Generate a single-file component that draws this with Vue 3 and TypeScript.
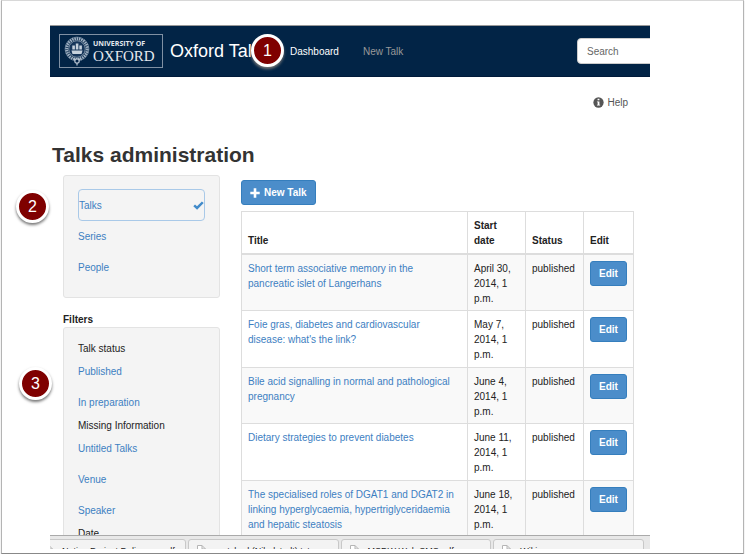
<script setup lang="ts">
interface Talk {
  title: string
  date: string
}

const sections: string[] = ['Series', 'People']

const talks: Talk[] = [
  { title: 'Short term associative memory in the pancreatic islet of Langerhans', date: 'April 30, 2014, 1 p.m.' },
  { title: "Foie gras, diabetes and cardiovascular disease: what's the link?", date: 'May 7, 2014, 1 p.m.' },
  { title: 'Bile acid signalling in normal and pathological pregnancy', date: 'June 4, 2014, 1 p.m.' },
  { title: 'Dietary strategies to prevent diabetes', date: 'June 11, 2014, 1 p.m.' },
  { title: 'The specialised roles of DGAT1 and DGAT2 in linking hyperglycaemia, hypertriglyceridaemia and hepatic steatosis', date: 'June 18, 2014, 1 p.m.' },
]

const filters: { heading: string; links: string[] }[] = [
  { heading: 'Talk status', links: ['Published', 'In preparation'] },
  { heading: 'Missing Information', links: ['Untitled Talks', 'Venue', 'Speaker'] },
  { heading: 'Date', links: [] },
]

const downloads: string[] = ['Native Project Delivery....pdf', 'matched (Nibolstadt).txt', 'MSDW Web SMS.pdf', 'Wiki.png']
</script>

<template>
  <div class="slide">
    <div class="browser">
      <header class="navbar">
        <a class="logo" href="#" aria-label="University of Oxford">
          <svg class="crest" viewBox="0 0 26 30" aria-hidden="true">
            <circle cx="13" cy="13" r="10.4" fill="none" stroke="#9fb0c2" stroke-width="3" stroke-dasharray="1.6 .7" />
            <circle cx="13" cy="13" r="12" fill="none" stroke="#8195ab" stroke-width=".6" />
            <circle cx="13" cy="13" r="8.3" fill="#16365a" stroke="#a9b9c9" stroke-width=".7" />
            <path d="M7.500 14.500h11l-1 3.500h-9zM8.300 9.500h2.600v4H8.300zM11.800 7.500h2.600v6h-2.600zM15.300 9.500h2.600v4h-2.600z" fill="#c6d1dc" />
            <circle cx="13" cy="25" r="2.200" fill="#002147" stroke="#b7c4d1" stroke-width="1.200" />
            <path d="M13 27v2.500M9.500 22.500l2 1.500M16.500 22.500l-2 1.500" fill="none" stroke="#b7c4d1" stroke-width="1.200" />
          </svg>
          <span class="logo-text">
            <span class="logo-small">UNIVERSITY OF</span>
            <span class="logo-large">OXFORD</span>
          </span>
        </a>
        <a class="brand" href="#">Oxford Talks</a>
        <nav class="menu">
          <a class="current" href="#">Dashboard</a>
          <a href="#">New Talk</a>
        </nav>
        <input class="search" type="search" placeholder="Search" aria-label="Search" />
      </header>

      <main class="page">
        <a class="help" href="#">
          <svg viewBox="0 0 12 12" aria-hidden="true">
            <circle cx="6" cy="6" r="5.600" fill="#555" />
            <path d="M5 2h2v1.600H5zM4.300 4.800H7v3.600h.8v1H4.300v-1h.8V5.800h-.8z" fill="#fff" />
          </svg>
          Help
        </a>
        <h1>Talks administration</h1>
        <div class="columns">
          <aside>
            <nav class="well">
              <a class="item selected" href="#">
                Talks
                <svg viewBox="0 0 11 9" aria-hidden="true">
                  <path d="M.3 5.200 2 3.400 4 5.200 8.900.4l1.800 1.700L4.100 8.700z" fill="#428bca" />
                </svg>
              </a>
              <a v-for="s in sections" :key="s" class="item" href="#">{{ s }}</a>
            </nav>
            <h2>Filters</h2>
            <div class="well">
              <template v-for="f in filters" :key="f.heading">
                <h3>{{ f.heading }}</h3>
                <a v-for="l in f.links" :key="l" class="item" href="#">{{ l }}</a>
              </template>
            </div>
          </aside>

          <section class="content">
            <button class="btn new" type="button">
              <svg viewBox="0 0 10 10" aria-hidden="true"><path d="M3.700.3h2.600v3.400h3.400v2.600H6.300v3.400H3.700V6.300H.3V3.700h3.400z" fill="#fff" /></svg>
              New Talk
            </button>
            <table>
              <thead>
                <tr>
                  <th>Title</th>
                  <th class="date">Start date</th>
                  <th class="status">Status</th>
                  <th class="edit">Edit</th>
                </tr>
              </thead>
              <tbody>
                <tr v-for="t in talks" :key="t.title">
                  <td class="title"><a href="#">{{ t.title }}</a></td>
                  <td>{{ t.date }}</td>
                  <td>published</td>
                  <td><button class="btn" type="button">Edit</button></td>
                </tr>
              </tbody>
            </table>
          </section>
        </div>
      </main>

      <footer class="downloads">
        <div v-for="d in downloads" :key="d" class="download">
          <svg viewBox="0 0 9 11" aria-hidden="true"><path d="M.5.500h4.500l3.500 3.500v6.500h-8zM5 .5V4h3.500" fill="#fff" stroke="#b5b5b5" /></svg>
          <span class="file">{{ d }}</span>
        </div>
      </footer>
    </div>

    <span class="marker one">1</span>
    <span class="marker two">2</span>
    <span class="marker three">3</span>
  </div>
</template>

<style>
body {
  margin: 0;
  background: #fff;
}
</style>

<style scoped>
* {
  box-sizing: border-box;
}

.slide {
  position: relative;
  height: calc(100vh - 3px);
  margin: 0 1px;
  padding: 24px 93px 4px 48px;
  border: 1px solid #b4b4b4;
  border-top-color: #d8d8d8;
  border-bottom: 1px solid #888;
  box-shadow: 0 1px 1px #bbb;
  font: 10px/15px "Liberation Sans", Arial, sans-serif;
  color: #222;
}

.browser {
  display: flex;
  flex-direction: column;
  height: 100%;
  overflow: hidden;
}

a {
  color: #3d80c2;
  text-decoration: none;
}

.navbar {
  display: flex;
  flex: none;
  align-items: center;
  height: 52px;
  padding-left: 9px;
  border-top: 1px solid #999;
  border-bottom: 1px solid #001a3a;
  background: #022446;
}

.logo {
  display: flex;
  flex: none;
  align-items: center;
  gap: 3px;
  width: 104px;
  height: 34px;
  padding-left: 4px;
  border: 1px solid #8090a3;
  color: #e4e9ee;
}

.crest {
  width: 26px;
  height: 30px;
}

.logo-text {
  display: flex;
  flex-direction: column;
  gap: 2px;
}

.logo-small {
  font: bold 7px/8px "Open Sans", sans-serif;
}

.logo-large {
  font: 15px/13px "Liberation Serif", serif;
}

.brand {
  flex: none;
  width: 112px;
  margin-left: 7px;
  color: #fff;
  font-size: 18px;
  line-height: 24px;
}

.menu {
  display: flex;
  flex: 1;
  gap: 24px;
  padding-left: 8px;
}

.menu a {
  color: #999;
}

.menu .current {
  color: #fff;
}

.search {
  flex: none;
  width: 150px;
  height: 26px;
  margin-right: -77px;
  padding: 0 9px;
  border: 1px solid #ccc;
  border-radius: 4px;
  background: #fff;
  font: inherit;
}

.search::placeholder {
  color: #666;
}

.page {
  display: flex;
  flex: 1;
  flex-direction: column;
  min-height: 0;
  overflow: hidden;
  padding: 18px 16px 0 2px;
}

.help {
  display: flex;
  align-items: center;
  align-self: flex-end;
  gap: 3px;
  margin-right: 6px;
  color: #555;
}

.help svg {
  width: 11px;
  height: 11px;
}

h1 {
  margin: 32px 0 8px;
  color: #333;
  font-size: 21px;
  line-height: 25px;
}

.columns {
  display: flex;
  gap: 21px;
  padding-left: 11px;
}

aside {
  flex: none;
  width: 157px;
}

.well {
  padding: 13px 14px 14px;
  border: 1px solid #e3e3e3;
  border-radius: 3px;
  background: #f4f4f4;
}

.item {
  display: flex;
  align-items: center;
  justify-content: space-between;
  height: 31px;
}

.selected {
  height: 32px;
  border: 1px solid #a9c9e8;
  border-radius: 4px;
}

.selected svg {
  width: 11px;
  height: 9px;
}

h2 {
  margin: 14px 0 0;
  font-size: 10px;
  line-height: 15px;
}

h3 {
  margin: 0;
  font-size: 10px;
  font-weight: normal;
  line-height: 15px;
}

.content {
  flex: 1;
  min-width: 0;
  padding-top: 5px;
}

.btn {
  height: 25px;
  padding: 0 8px;
  border: 1px solid #357ebd;
  border-radius: 3px;
  background: #4b8dca;
  color: #fff;
  font: bold 10px/15px "Liberation Sans", Arial, sans-serif;
}

.new {
  display: flex;
  align-items: center;
  gap: 4px;
  margin-bottom: 6px;
}

.new svg {
  width: 10px;
  height: 10px;
}

table {
  width: 100%;
  border-collapse: collapse;
  table-layout: fixed;
}

th,
td {
  padding: 6px 6px 4px;
  border: 1px solid #ddd;
  text-align: left;
  vertical-align: top;
}

th {
  padding-bottom: 5px;
  border-bottom-width: 2px;
  vertical-align: bottom;
}

.title {
  padding-right: 10px;
}

.date,
.status {
  width: 58px;
}

.edit {
  width: 50px;
}

tbody tr:nth-child(odd) {
  background: #f9f9f9;
}

tbody tr:nth-child(even) td {
  padding-bottom: 5px;
}

td .btn {
  width: 37px;
  padding: 0;
}

.downloads {
  display: flex;
  flex: none;
  gap: 2px;
  height: 14px;
  padding: 3px 6px 0 0;
  overflow: hidden;
  border-top: 1px solid #aaa;
  background: #e8e8e8;
}

.download {
  display: flex;
  flex: 1 1 0;
  gap: 9px;
  min-width: 0;
  height: 24px;
  padding: 5px 9px 5px 8px;
  border: 1px solid #c8c8c8;
  border-radius: 3px;
  background: #f3f3f3;
  color: #222;
  font-size: 9px;
  line-height: 13px;
  white-space: nowrap;
}

.download:first-child {
  margin-left: -15px;
}

.download svg {
  flex: none;
  width: 9px;
  height: 11px;
}

.file {
  flex: 1;
  min-width: 0;
}

.marker {
  position: absolute;
  width: 33px;
  height: 33px;
  border: 3px solid #fff;
  border-radius: 50%;
  background: #7f0000;
  box-shadow: 0 2px 3px #777;
  color: #fff;
  font-size: 16px;
  line-height: 27px;
  text-align: center;
}

.one {
  top: 33px;
  left: 249px;
}

.two {
  top: 189px;
  left: 14px;
}

.three {
  top: 366px;
  left: 17px;
}
</style>
